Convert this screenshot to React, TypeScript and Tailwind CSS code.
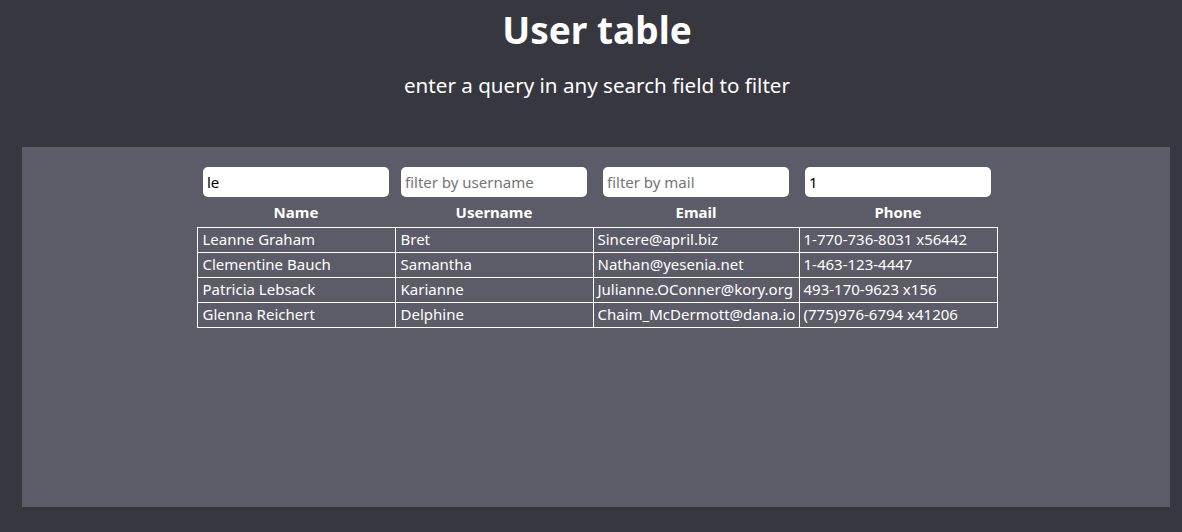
import { useState } from 'react'

interface User {
  name: string
  username: string
  email: string
  phone: string
}

const users: User[] = [
  { name: 'Leanne Graham', username: 'Bret', email: 'Sincere@april.biz', phone: '1-770-736-8031 x56442' },
  { name: 'Clementine Bauch', username: 'Samantha', email: 'Nathan@yesenia.net', phone: '1-463-123-4447' },
  { name: 'Patricia Lebsack', username: 'Karianne', email: 'Julianne.OConner@kory.org', phone: '493-170-9623 x156' },
  { name: 'Glenna Reichert', username: 'Delphine', email: 'Chaim_McDermott@dana.io', phone: '(775)976-6794 x41206' },
]

const font = { fontFamily: '"Noto Sans", "Open Sans", sans-serif' }

export default function App() {
  const [name, setName] = useState('le')
  const [username, setUsername] = useState('')
  const [mail, setMail] = useState('')
  const [phone, setPhone] = useState('1')

  const inputClass =
    'w-[186px] h-[30px] rounded-[5px] bg-white px-[4px] text-[15px] text-black placeholder:text-[#757575] outline-none'

  return (
    <div className="min-h-screen bg-[#37373f] text-white" style={font}>
      <header className="h-[147px] pl-[12px] flex flex-col items-center">
        <h1 className="mt-[6px] text-[37px] leading-[48px] font-bold">User table</h1>
        <p className="mt-[16px] text-[20.6px] leading-[30px]">enter a query in any search field to filter</p>
      </header>

      <div className="ml-[22px] w-[1148px] h-[360px] bg-[#5b5c67] pt-[18px] pl-[2px]">
        <table className="mx-auto w-[800px] table-fixed border-collapse text-[15px]">
          <colgroup>
            <col className="w-[198px]" />
            <col className="w-[198px]" />
            <col className="w-[206px]" />
            <col className="w-[198px]" />
          </colgroup>
          <thead>
            <tr className="h-[34px]">
              <th className="p-0 font-normal">
                <input className={inputClass} value={name} onChange={e => setName(e.target.value)} />
              </th>
              <th className="p-0 font-normal">
                <input className={inputClass} placeholder="filter by username" value={username} onChange={e => setUsername(e.target.value)} />
              </th>
              <th className="p-0 font-normal">
                <input className={inputClass} placeholder="filter by mail" value={mail} onChange={e => setMail(e.target.value)} />
              </th>
              <th className="p-0 font-normal">
                <input className={inputClass} value={phone} onChange={e => setPhone(e.target.value)} />
              </th>
            </tr>
            <tr className="h-[28px]">
              <th className="p-0 pb-[2px] font-bold">Name</th>
              <th className="p-0 pb-[2px] font-bold">Username</th>
              <th className="p-0 pb-[2px] font-bold">Email</th>
              <th className="p-0 pb-[2px] font-bold">Phone</th>
            </tr>
          </thead>
          <tbody>
            {users.map(u => (
              <tr key={u.username} className="h-[25px]">
                <td className="border border-white px-[5px] py-0 leading-[23px] whitespace-nowrap overflow-hidden">{u.name}</td>
                <td className="border border-white px-[5px] py-0 leading-[23px] whitespace-nowrap overflow-hidden">{u.username}</td>
                <td className="border border-white px-[4px] py-0 leading-[23px] whitespace-nowrap overflow-hidden">{u.email}</td>
                <td className="border border-white px-[4px] py-0 leading-[23px] whitespace-nowrap overflow-hidden">{u.phone}</td>
              </tr>
            ))}
          </tbody>
        </table>
      </div>
    </div>
  )
}
